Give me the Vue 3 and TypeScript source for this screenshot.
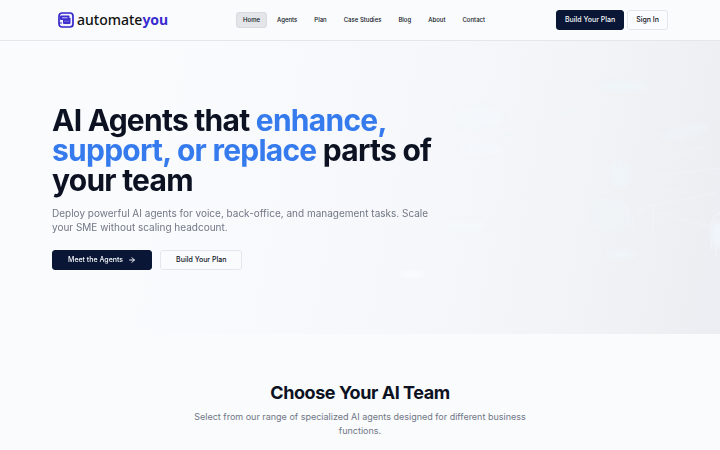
<script setup lang="ts">
interface NavItem {
  label: string
  href: string
}

const navItems: NavItem[] = [
  { label: 'Home', href: '#home' },
  { label: 'Agents', href: '#agents' },
  { label: 'Plan', href: '#plan' },
  { label: 'Case Studies', href: '#case-studies' },
  { label: 'Blog', href: '#blog' },
  { label: 'About', href: '#about' },
  { label: 'Contact', href: '#contact' },
]
const current = 'Home'
</script>

<template>
  <div class="page">
    <header class="header">
      <div class="container bar">
        <a class="brand" href="#home">
          <svg class="mark" viewBox="0 0 32 32" aria-hidden="true">
            <rect x="2" y="2" width="28" height="28" rx="6" fill="#f1f0ff" stroke="#3526c8" stroke-width="3.4" />
            <path d="M2 22h6" stroke="#3526c8" stroke-width="2" />
            <path d="M6 7h15a2 2 0 0 1 2 2v3h2v10a2 2 0 0 1-2 2H12a2 2 0 0 1-2-2v-6H6a2 2 0 0 1-2-2V9a2 2 0 0 1 2-2z" fill="#3d30cf" />
            <path d="M8 11.500h11" stroke="#d8d5fb" stroke-width="1.800" />
            <path d="M13 18.500h2m2 0h2m2 0h1" stroke="#a59ef0" stroke-width="2" />
          </svg>
          <span class="word">automate<b>you</b></span>
        </a>
        <nav class="nav" aria-label="Main">
          <a
            v-for="item in navItems"
            :key="item.label"
            :href="item.href"
            :class="{ active: item.label === current }"
            :aria-current="item.label === current ? 'page' : undefined"
          >{{ item.label }}</a>
        </nav>
        <div class="account">
          <button type="button" class="btn primary compact">Build Your Plan</button>
          <button type="button" class="btn outline compact">Sign In</button>
        </div>
      </div>
    </header>

    <main>
      <section class="hero">
        <svg class="scene" viewBox="0 0 320 294" preserveAspectRatio="xMaxYMid slice" aria-hidden="true">
          <defs>
            <filter id="soft" x="-20%" y="-50%" width="140%" height="200%" color-interpolation-filters="sRGB">
              <feGaussianBlur stdDeviation="2.5" />
            </filter>
            <filter id="fine" x="-20%" y="-20%" width="140%" height="140%" color-interpolation-filters="sRGB">
              <feGaussianBlur stdDeviation="0.6" />
            </filter>
          </defs>
          <g fill="#eff5fa" filter="url(#soft)">
            <ellipse cx="223" cy="46" rx="24" ry="5" />
            <ellipse cx="284" cy="92" rx="25" ry="6" transform="rotate(-12 284 92)" opacity=".6" />
            <ellipse cx="82" cy="109" rx="22" ry="6" fill="#f4f8fc" />
            <ellipse cx="78" cy="78" rx="26" ry="12" fill="#f4f8fc" opacity=".6" />
            <ellipse cx="66" cy="186" rx="22" ry="5" fill="#f4f8fc" />
            <ellipse cx="221" cy="214" rx="15" ry="4" />
            <ellipse cx="12" cy="234" rx="14" ry="3" fill="#fafcfe" />
            <ellipse cx="220" cy="135" rx="11" ry="13" opacity=".8" />
            <ellipse cx="211" cy="176" rx="20" ry="17" opacity=".5" />
            <ellipse cx="318" cy="195" rx="7" ry="14" />
          </g>
          <g fill="none" stroke="#f0f5fa" stroke-width="1.4" filter="url(#fine)">
            <path d="M100 98C134 84 172 70 208 60" />
            <path d="M211 142v-11q0-9 9-9t10 9M213 142v14l15 14v20M187 190v-16q4-15 25-16M193 190v-18M232 190v-12l10-8 11-6v26" opacity=".8" />
            <path d="M232 128l70-21M240 138l80-10M242 145l42 8M110 155l70-10M252 165l64-12M256 172l55 15M160 88l70-10" opacity=".4" />
            <path d="M311 210v-25q2-10 9-12M316 216v-28" opacity=".7" />
          </g>
        </svg>
        <div class="container copy">
          <h1>AI Agents that <span>enhance, support, or replace</span> parts of your team</h1>
          <p>Deploy powerful AI agents for voice, back-office, and management tasks. Scale your SME without scaling headcount.</p>
          <div class="actions">
            <button type="button" class="btn primary">
              Meet the Agents
              <svg class="arrow" viewBox="0 0 24 24" aria-hidden="true">
                <path d="M5 12h14M12 5l7 7-7 7" />
              </svg>
            </button>
            <button type="button" class="btn outline">Build Your Plan</button>
          </div>
        </div>
      </section>

      <section class="team">
        <h2>Choose Your AI Team</h2>
        <p>Select from our range of specialized AI agents designed for different business functions.</p>
      </section>
    </main>
  </div>
</template>

<style>
body {
  margin: 0;
  background: #f9fbfd;
}
</style>

<style scoped>
.page {
  font-family: Inter, "Liberation Sans", sans-serif;
  color: #0c1222;
  background: #f9fbfd;
}
.container {
  box-sizing: border-box;
  max-width: 700px;
  margin: 0 auto;
  padding: 0 42px;
}
.header {
  position: relative;
  z-index: 1;
  box-shadow: 0 1px 0 #e3e6eb;
}
.bar {
  display: flex;
  align-items: center;
  justify-content: space-between;
  height: 40px;
}
.brand {
  display: flex;
  align-items: center;
  gap: 3px;
  padding-left: 6px;
  color: #111;
  text-decoration: none;
}
.mark {
  width: 16px;
  height: 16px;
}
.word {
  font: 500 14px/16px "Noto Sans", sans-serif;
}
.word b {
  font-weight: 700;
  color: #3a2bd0;
}
.nav {
  display: flex;
  gap: 3px;
  padding-left: 4px;
}
.nav a {
  padding: 4px 6px;
  border: 1px solid transparent;
  border-radius: 3px;
  font-size: 6px;
  line-height: 6px;
  font-weight: 500;
  color: #0c1222;
  text-decoration: none;
}
.nav .active {
  background: #e3e5e9;
  border-color: #d8dadf;
}
.account {
  display: flex;
  gap: 3px;
}
.btn {
  display: flex;
  align-items: center;
  justify-content: center;
  gap: 5px;
  height: 20px;
  padding: 0 15px;
  border: 1px solid transparent;
  border-radius: 3px;
  font-family: inherit;
  font-size: 7px;
  line-height: 10px;
  font-weight: 500;
}
.compact {
  padding: 0 8px;
}
.primary {
  background: #091635;
  border-color: #091635;
  color: #f8fafc;
}
.outline {
  background: #fafbfd;
  border-color: #e3e7ed;
  color: #0c1222;
}
.arrow {
  width: 8px;
  height: 8px;
  fill: none;
  stroke: currentColor;
  stroke-width: 3;
  stroke-linecap: round;
  stroke-linejoin: round;
}
.hero {
  position: relative;
  padding: 65px 0 64px;
  background: linear-gradient(100deg, #f9fbfd 20%, #f5f7fa 60%, #f1f3f6 80%, #ecedf2 100%);
}
.scene {
  position: absolute;
  top: 0;
  right: 0;
  height: 100%;
}
.copy {
  position: relative;
}
h1 {
  max-width: 384px;
  margin: 0;
  font-size: 30px;
  line-height: 30px;
  font-weight: 700;
  letter-spacing: -0.025em;
}
h1 span {
  color: #367bee;
}
.hero p {
  max-width: 384px;
  margin: 11px 0 16px;
  font-size: 10px;
  line-height: 14px;
  color: #717785;
}
.actions {
  display: flex;
  gap: 8px;
}
.team {
  padding: 48px 16px;
  text-align: center;
}
h2 {
  margin: 0 0 6px;
  font-size: 18px;
  line-height: 22px;
  font-weight: 700;
  letter-spacing: -0.025em;
}
.team p {
  max-width: 336px;
  margin: 0 auto;
  font-size: 9px;
  line-height: 14px;
  color: #717785;
}
</style>
